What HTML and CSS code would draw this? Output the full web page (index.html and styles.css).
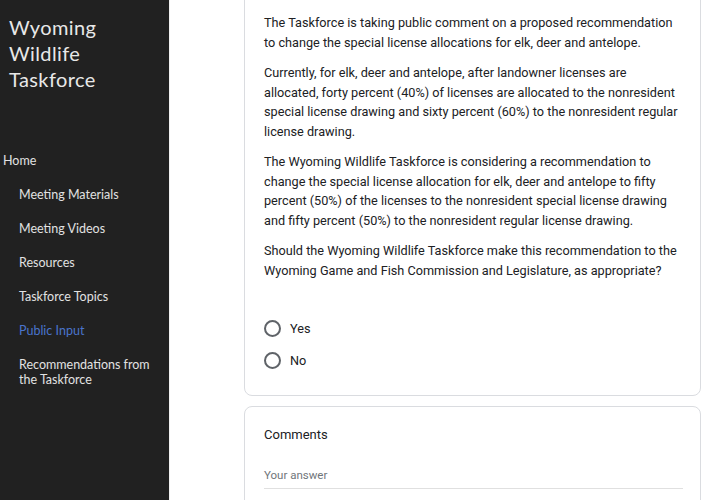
FILE: index.html
```html
<!DOCTYPE html>
<html>
<head>
<meta charset="utf-8">
<link rel="stylesheet" href="styles.css">
</head>
<body>
<div class="layout">
  <aside class="sidebar">
    <div class="site-title">Wyoming<br>Wildlife<br>Taskforce</div>
    <nav class="nav">
      <a class="nav-home">Home</a>
      <a class="nav-item">Meeting Materials</a>
      <a class="nav-item">Meeting Videos</a>
      <a class="nav-item">Resources</a>
      <a class="nav-item">Taskforce Topics</a>
      <a class="nav-item active">Public Input</a>
      <a class="nav-item">Recommendations from the Taskforce</a>
    </nav>
  </aside>
  <main class="main">
    <div class="form">
      <section class="card question">
        <p>The Taskforce is taking public comment on a proposed recommendation to change the special license allocations for elk, deer and antelope.</p>
        <p>Currently, for elk, deer and antelope, after landowner licenses are allocated, forty percent (40%) of licenses are allocated to the nonresident special license drawing and sixty percent (60%) to the nonresident regular license drawing.</p>
        <p>The Wyoming Wildlife Taskforce is considering a recommendation to change the special license allocation for elk, deer and antelope to fifty percent (50%) of the licenses to the nonresident special license drawing and fifty percent (50%) to the nonresident regular license drawing.</p>
        <p>Should the Wyoming Wildlife Taskforce make this recommendation to the Wyoming Game and Fish Commission and Legislature, as appropriate?</p>
        <div class="options">
          <label class="option"><span class="radio"></span><span>Yes</span></label>
          <label class="option"><span class="radio"></span><span>No</span></label>
        </div>
      </section>
      <section class="card comments">
        <div class="card-title">Comments</div>
        <div class="answer">Your answer</div>
      </section>
    </div>
  </main>
</div>
</body>
</html>
```
FILE: styles.css
```css
html, body {
  margin: 0;
  padding: 0;
  height: 100%;
  overflow: hidden;
  background: #ffffff;
}
.layout {
  display: flex;
  height: 500px;
}
.sidebar {
  width: 169px;
  flex: none;
  background: #212121;
  font-family: Lato, "Open Sans", sans-serif;
  color: #e6e6e6;
  padding-top: 14px;
  box-sizing: border-box;
}
.site-title {
  font-size: 20px;
  line-height: 26px;
  letter-spacing: 0.4px;
  padding-left: 9px;
  color: #e8e8e8;
}
.nav {
  display: flex;
  flex-direction: column;
  margin-top: 52px;
}
.nav a {
  font-size: 12.5px;
  line-height: 15px;
  color: #e2e2e2;
  padding: 9px 0 10px 19px;
}
.nav .nav-home {
  padding-left: 3px;
}
.nav .active {
  color: #4a74cc;
}
.main {
  flex: 1;
  border-left: 1px solid #f0f0f0;
  padding-left: 74px;
  padding-right: 20px;
  overflow: hidden;
}
.form {
  width: 457px;
  margin-top: -20px;
  display: flex;
  flex-direction: column;
  gap: 10px;
}
.card {
  border: 1px solid #dadce0;
  border-radius: 8px;
  background: #fff;
  padding: 0 20px 0 19px;
  font-family: Roboto, Arial, sans-serif;
  color: #202124;
}
.question {
  padding-top: 32px;
  padding-bottom: 25px;
}
.question p {
  margin: 0 0 11px 0;
  font-size: 12.7px;
  line-height: 19.5px;
}
.options {
  margin-top: 38px;
  display: flex;
  flex-direction: column;
  gap: 12px;
}
.option {
  display: flex;
  align-items: center;
  gap: 9px;
  font-size: 12.7px;
  height: 20px;
}
.radio {
  width: 13px;
  height: 13px;
  border: 2px solid #5f6368;
  border-radius: 50%;
}
.comments {
  padding-top: 19px;
  height: 120px;
}
.card-title {
  font-size: 13px;
  line-height: 18px;
}
.answer {
  margin-top: 24px;
  font-size: 11.5px;
  color: #70757a;
  padding-bottom: 6px;
  border-bottom: 1px solid #e0e0e0;
  width: 419px;
}
```
